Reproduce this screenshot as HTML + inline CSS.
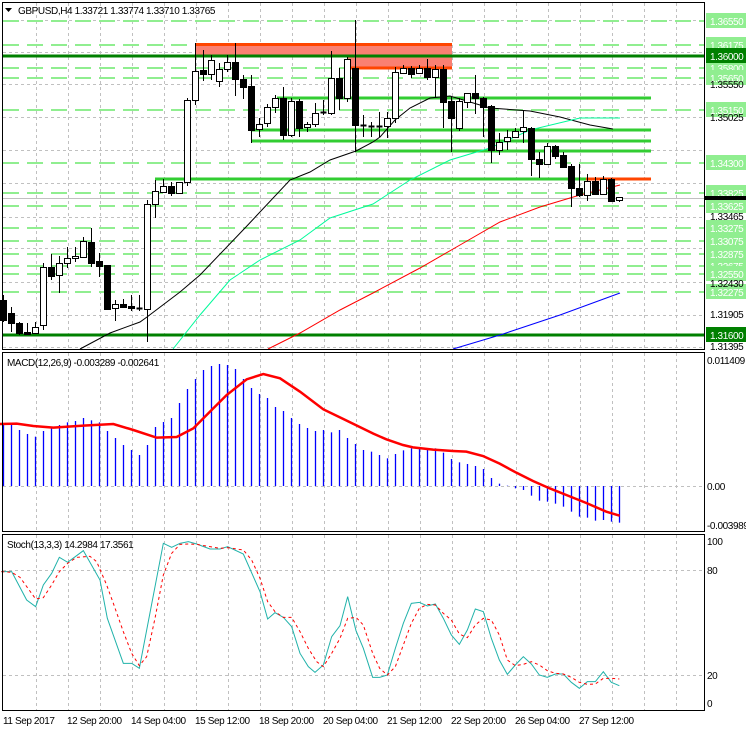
<!DOCTYPE html>
<html><head><meta charset="utf-8">
<style>
html,body{margin:0;padding:0;background:#fff;}
body{width:746px;height:731px;overflow:hidden;position:relative;font-family:"Liberation Sans",sans-serif;}
svg{position:absolute;left:0;top:0;}
svg text{font-family:"Liberation Sans",sans-serif;font-size:10px;letter-spacing:-0.4px;}
</style></head><body>
<svg id="s" width="746" height="731" viewBox="0 0 746 731" xmlns="http://www.w3.org/2000/svg">
<g id="grid" stroke="#c0c0c0" stroke-width="1" stroke-dasharray="3,3" fill="none"></g>
<g id="levels"></g>
<g id="mas" fill="none"></g>
<g id="candles"></g>
<g id="macd"></g>
<g id="stoch" fill="none"></g>
<g fill="none" stroke="#000" stroke-width="1">
<rect x="2.5" y="2.5" width="702" height="347"/>
<rect x="2.5" y="352.5" width="702" height="179"/>
<rect x="2.5" y="534.5" width="702" height="176"/>
</g>
<polygon points="5,8 12,8 8.5,12" fill="#000"/>
<text x="18" y="14" fill="#000">GBPUSD,H4  1.33721 1.33774 1.33710 1.33765</text>
<text x="7" y="366" fill="#000">MACD(12,26,9) -0.003289 -0.002641</text>
<text x="7" y="548" fill="#000">Stoch(13,3,3) 14.2984 17.3561</text>
<g id="axis"></g>
<g fill="#000">
<text x="3" y="724">11 Sep 2017</text>
<text x="67" y="724">12 Sep 20:00</text>
<text x="131" y="724">14 Sep 04:00</text>
<text x="195" y="724">15 Sep 12:00</text>
<text x="259" y="724">18 Sep 20:00</text>
<text x="323" y="724">20 Sep 04:00</text>
<text x="387" y="724">21 Sep 12:00</text>
<text x="451" y="724">22 Sep 20:00</text>
<text x="515" y="724">26 Sep 04:00</text>
<text x="579" y="724">27 Sep 12:00</text>
<text x="707" y="364">0.011409</text>
<text x="707" y="490">0.00</text>
<text x="707" y="529">-0.003989</text>
<text x="707" y="545">100</text>
<text x="707" y="574">80</text>
<text x="707" y="679">20</text>
<text x="707" y="707">0</text>
</g>
<g id="plabels">
<text x="710" y="88" fill="#000">1.35550</text>
<text x="710" y="121" fill="#000">1.35025</text>
<text x="710" y="220" fill="#000">1.33465</text>
<text x="710" y="287" fill="#000">1.32430</text>
<text x="710" y="318" fill="#000">1.31905</text>
<text x="710" y="350" fill="#000">1.31395</text>
</g>
</svg>
<script>
var NS="http://www.w3.org/2000/svg";
function el(p,t,a){var e=document.createElementNS(NS,t);for(var k in a)e.setAttribute(k,a[k]);document.getElementById(p).appendChild(e);return e;}
for(var x=36;x<=680;x+=32){el('grid','line',{x1:x+.5,y1:3,x2:x+.5,y2:349});el('grid','line',{x1:x+.5,y1:353,x2:x+.5,y2:531});el('grid','line',{x1:x+.5,y1:535,x2:x+.5,y2:710});}
[20,52,84,117,150,183,217,248,282,315,347].forEach(function(y){el('grid','line',{x1:3,y1:y+.5,x2:704,y2:y+.5});});
[486,570,675].forEach(function(y){el('grid','line',{x1:3,y1:y+.5,x2:704,y2:y+.5});});
function Y(p){return 21+(1.3655-p)/0.0001*0.633;}
var lg=[1.3655,1.36175,1.358,1.3565,1.3515,1.343,1.33825,1.33625,1.33275,1.33075,1.32875,1.32675,1.3255,1.32275];
lg.forEach(function(p){var y=Math.round(Y(p));el('levels','line',{x1:3,y1:y,x2:704,y2:y,stroke:'#90ee90','stroke-width':2,'stroke-dasharray':'16,8'});});
el('levels','line',{x1:3,y1:198.5,x2:704,y2:198.5,stroke:'#c0c0c0','stroke-width':1});
el('levels','rect',{x:195,y:44,width:257,height:12,fill:'#fa8072'});
el('levels','rect',{x:347,y:56,width:105,height:13,fill:'#fa8072'});
el('levels','line',{x1:195,y1:44.5,x2:452,y2:44.5,stroke:'#ff4500','stroke-width':3});
el('levels','line',{x1:347,y1:68,x2:452,y2:68,stroke:'#ff4500','stroke-width':3});
[56,335].forEach(function(y){el('levels','line',{x1:3,y1:y,x2:704,y2:y,stroke:'#008000','stroke-width':3});});
[[277,98],[252,130],[252,141],[355,151],[155,179]].forEach(function(a){el('levels','line',{x1:a[0],y1:a[1],x2:651,y2:a[1],stroke:'#32cd32','stroke-width':3});});
el('levels','line',{x1:586,y1:179,x2:651,y2:179,stroke:'#ff4500','stroke-width':3});
function pl(g,pts,c,w,d){var a={points:pts.map(function(p){return p[0]+','+p[1];}).join(' '),stroke:c,'stroke-width':w||1,fill:'none'};if(d)a['stroke-dasharray']=d;el(g,'polyline',a);}
pl('mas',[[80,349],[110,333],[140,322],[147,317],[180,292],[200,275],[245,228],[290,180],[310,172],[330,160],[356,151],[373,142],[380,137],[395,120],[410,108],[430,98],[450,96],[490,108],[530,111],[560,117],[590,125],[613,129]],'#000');
pl('mas',[[173,349],[200,315],[230,280],[260,260],[300,240],[330,218],[373,204],[410,180],[450,160],[490,148],[530,130],[580,118],[620,118]],'#00fa9a');
pl('mas',[[268,349],[300,333],[340,310],[373,293],[420,268],[460,245],[500,222],[540,207],[580,195],[620,185]],'#ff0000');
pl('mas',[[453,349],[500,335],[560,315],[620,293]],'#0000ff');
var C=[[300,320,295,322,0],[313,323,307,332,0],[323,333,322,335,0],[332,334,323,335,0],[327,333,322,334,1],[267,325,263,330,1],[267,276,254,280,0],[263,275,256,293,1],[258,263,247,268,1],[256,258,247,262,1],[241,257,237,258,1],[242,263,228,267,0],[261,266,253,277,0],[265,309,265,310,0],[304,308,300,321,1],[304,307,299,308,0],[306,308,295,311,0],[308,309,295,311,0],[204,309,200,342,1],[191,204,180,218,1],[186,192,179,193,1],[186,193,182,196,0],[182,193,182,193,1],[100,182,98,186,1],[71,100,43,105,1],[70,74,50,81,0],[60,74,55,80,1],[69,81,63,87,1],[62,69,55,72,1],[62,79,43,96,0],[79,87,75,99,0],[86,130,75,143,0],[124,129,118,137,1],[107,123,104,127,1],[98,107,95,113,1],[98,135,87,140,0],[101,135,98,137,1],[101,128,99,137,0],[124,127,122,132,1],[113,124,103,127,1],[112,113,100,115,1],[78,113,51,115,1],[78,98,68,110,0],[59,98,57,102,1],[68,125,20,152,0],[125,126,115,137,0],[126,127,122,137,0],[126,127,112,137,1],[118,126,112,138,1],[72,118,67,123,1],[68,73,65,74,1],[68,74,66,78,0],[68,73,65,74,1],[68,77,59,80,0],[69,77,65,97,1],[69,102,65,128,0],[101,118,97,152,0],[101,128,98,131,1],[93,102,93,108,1],[93,98,75,114,0],[98,107,97,137,0],[106,150,105,163,0],[142,150,133,155,1],[137,141,130,150,1],[131,137,128,138,1],[127,131,110,143,1],[128,159,127,176,0],[159,164,152,178,0],[146,164,143,165,1],[146,156,145,159,0],[155,167,152,167,0],[166,188,164,207,0],[188,195,164,197,0],[181,195,174,201,1],[181,194,177,194,0],[179,194,176,194,1],[179,201,178,202,0],[197,200,197,202,1]];
C.forEach(function(c,k){var x=Math.round(3.3+8*k)+.5;
el('candles','line',{x1:x,y1:c[2],x2:x,y2:c[3],stroke:'#000','stroke-width':1});
var h=Math.max(1,c[1]-c[0]);
if(h<=1.5){el('candles','line',{x1:x-3,y1:c[0]+.5,x2:x+3,y2:c[0]+.5,stroke:'#000','stroke-width':2});}
else el('candles','rect',{x:x-3,y:c[0]+.5,width:6,height:h,fill:c[4]?'#fff':'#000',stroke:'#000','stroke-width':1});});
var H=[235,240,255,267,275,258,250,240,232,228,219,226,232,258,279,300,315,330,300,246,231,219,174,132,102,75,63,57,60,72,102,129,147,159,186,198,219,237,249,258,255,262,255,279,297,315,320,330,340,327,316,310,310,310,310,323,342,352,357,363,372,399,416,422,430,435,452,467,470,476,485,500,515,518,527,525,530,533];
H.forEach(function(py,k){var x=Math.round(3.3+8*k)+.5;var y=345+py/3;el('macd','line',{x1:x,y1:486,x2:x,y2:y,stroke:'#0000ff','stroke-width':1.3});});
function z3(a){return a.map(function(p){return [p[0]/3,345+p[1]/3];});}
function z4(a){return a.map(function(p){return [373+p[0]/3,345+p[1]/3];});}
pl('macd',z3([[0,237],[50,236],[100,243],[160,248],[250,242],[340,237],[400,255],[470,278],[530,276],[580,250],[630,200],[680,150],[740,103],[790,87],[840,100],[900,140],[970,193],[1030,222],[1120,266]]).concat(z4([[40,283],[90,300],[120,307],[180,314],[240,318],[280,320],[330,333],[380,356],[430,383],[480,408],[530,430],[580,450],[640,474],[700,500],[740,512]])),'#ff0000',2.5);
pl('stoch',z3([[4,680],[35,680],[80,765],[107,785],[130,720],[155,685],[178,637],[203,652],[250,617],[300,705],[322,820],[370,955],[395,955],[418,970],[490,595],[515,607],[540,595],[565,590],[590,597],[630,612],[660,612],[683,605],[730,627],[780,740],[803,822],[825,803],[850,817],[875,845],[900,925],[925,965],[945,982],[970,960],[995,875],[1020,842],[1043,755],[1068,857],[1090,910],[1118,997]]).concat(z4([[20,997],[43,990],[67,910],[91,835],[115,775],[139,772],[163,783],[187,777],[211,820],[235,870],[259,898],[283,855],[307,792],[331,800],[355,880],[379,945],[403,988],[427,960],[451,935],[475,957],[499,990],[523,997],[547,987],[571,987],[595,1012],[619,1030],[643,1010],[667,1010],[691,980],[715,1012],[739,1022]])),'#20b2aa',1);
pl('stoch',z3([[4,680],[35,682],[60,697],[107,762],[130,758],[155,720],[178,680],[203,655],[230,637],[270,634],[290,650],[320,720],[340,775],[370,860],[395,925],[418,962],[440,935],[465,820],[490,690],[515,625],[540,598],[565,597],[590,598],[630,605],[660,610],[683,608],[730,615],[755,645],[780,700],[803,770],[825,800],[850,817],[875,817],[900,860],[925,910],[950,950],[970,965],[995,925],[1020,880],[1043,820],[1068,817],[1090,840],[1118,925]]).concat(z4([[20,970],[43,990],[67,965],[91,900],[115,835],[139,790],[163,778],[187,780],[211,805],[235,825],[259,867],[283,878],[307,840],[331,820],[355,825],[379,870],[403,945],[427,962],[451,958],[475,950],[499,960],[523,977],[547,985],[571,987],[595,997],[619,1012],[643,1018],[667,1017],[691,1000],[715,1000],[739,1002]])),'#ff0000',1,'3,3');
lg.forEach(function(p){var y=Math.round(Y(p));el('axis','rect',{x:706,y:y-8,width:40,height:15,fill:'#90ee90'});var t=el('axis','text',{x:710,y:y+4,fill:'#fff'});t.textContent=p.toFixed(5);});
[[1.36,56],[1.316,335]].forEach(function(a){el('axis','rect',{x:706,y:a[1]-8,width:40,height:15,fill:'#008000'});var t=el('axis','text',{x:710,y:a[1]+4,fill:'#fff'});t.textContent=a[0].toFixed(5);});
el('axis','rect',{x:705,y:196,width:41,height:4,fill:'#000'});
</script>
</body></html>
